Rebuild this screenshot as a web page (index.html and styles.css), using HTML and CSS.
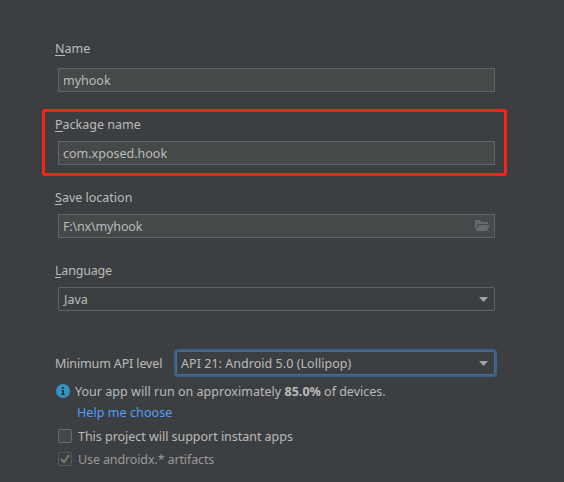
FILE: index.html
```html
<!DOCTYPE html>
<html lang="en">
<head>
<meta charset="utf-8">
<title>New Project</title>
<link rel="stylesheet" href="styles.css">
</head>
<body>
<main class="form">
  <section class="group group-first">
    <label class="label"><span><u>N</u>ame</span></label>
    <div class="field"><span class="text">myhook</span></div>
  </section>
  <section class="group">
    <label class="label"><span><u>P</u>ackage name</span></label>
    <div class="field"><span class="text">com.xposed.hook</span></div>
    <div class="highlight"></div>
  </section>
  <section class="group">
    <label class="label"><span><u>S</u>ave location</span></label>
    <div class="field"><span class="text t-path">F:\nx\myhook</span>
      <svg class="folder" width="16" height="12" viewBox="0 0 16 12"><path fill="#616b70" d="M1 0h5l1.5 2H14v2H4L1 9.5zM4.6 5H16l-3 6H1.5z"/></svg>
    </div>
  </section>
  <section class="group">
    <label class="label"><span class="t-language"><u>L</u>anguage</span></label>
    <div class="field combo"><span class="text">Java</span>
      <svg width="9" height="5" viewBox="0 0 9 5"><path fill="#a0a3a4" d="M0 0h9L4.5 5z"/></svg>
    </div>
  </section>
  <section class="api">
    <label class="label"><span class="text t-min">Minimum API level</span></label>
    <div class="field combo focused"><span class="text t-api">API 21: Android 5.0 (Lollipop)</span>
      <svg width="9" height="5" viewBox="0 0 9 5"><path fill="#a0a3a4" d="M0 0h9L4.5 5z"/></svg>
    </div>
  </section>
  <div class="info">
    <svg width="14" height="14" viewBox="0 0 14 14"><circle cx="7" cy="7" r="7" fill="#3592c4"/><path fill="#34393c" d="M6 3h2v2H6zM5 6h3v4h1v1H5v-1h1V7H5z"/></svg>
    <p class="line text"><span class="t-your">Your app will run on approximately </span><b>85.0%</b><span> of devices.</span></p>
  </div>
  <a class="help"><span class="text t-help">Help me choose</span></a>
  <div class="check">
    <span class="box"></span><span class="text t-instant">This project will support instant apps</span>
  </div>
  <div class="check disabled">
    <span class="box"><svg width="12" height="12" viewBox="0 0 12 12"><path fill="none" stroke="#777a7b" stroke-width="2" d="M2 6l3 3.2L10 2"/></svg></span><span class="text t-androidx">Use androidx.* artifacts</span>
  </div>
</main>
</body>
</html>
```
FILE: styles.css
```css
* { box-sizing: border-box; }
body {
  margin: 0;
  width: 564px;
  height: 482px;
  overflow: hidden;
  background: #3c3f41;
  color: #bbbbbb;
  font: 12.5px/20px "Noto Sans", "Open Sans", sans-serif;
}
.form { display: flex; flex-direction: column; padding: 39px 69px 0 55px; }
.form span, .form b { white-space: pre; }
.group { position: relative; display: flex; flex-direction: column; gap: 6px; height: 50px; margin-bottom: 23px; }
.group-first { gap: 9px; height: 53px; }
.label { display: block; height: 20px; }
.text { display: block; padding-top: 2px; line-height: 20px; }
u { text-decoration: none; display: inline-block; height: 17px; line-height: 20px; vertical-align: top; border-bottom: 1px solid #bbbbbb; }
.field {
  display: flex;
  align-items: center;
  justify-content: space-between;
  height: 24px;
  margin-left: 3px;
  padding: 0 4px;
  border: 1px solid #646464;
  background: #45494a;
}
.combo { background: #3c3f41; border-radius: 2px; padding: 0 6px 0 5px; }
.highlight {
  position: absolute;
  inset: -6px -12px -11px -13px;
  border: 3px solid #ff2016;
  border-radius: 3px;
}
.api { display: flex; align-items: center; justify-content: space-between; height: 28px; margin: 15px -2px 4px 0; }
.api .label { height: 22px; padding-bottom: 2px; }
.api .focused { width: 323px; height: 28px; margin: 0; border: 2px solid #3d6185; border-radius: 4px; box-shadow: inset 0 0 0 1px #466d94; padding: 0 7px 0 5px; }
.info { display: flex; align-items: center; gap: 5px; height: 20px; padding-left: 1px; }
.line { margin: 0; }
.help { height: 23.5px; padding-left: 22px; color: #589df6; }
.check { display: flex; align-items: center; gap: 6px; height: 23px; padding-left: 3px; }
.box { display: flex; align-items: center; justify-content: center; width: 14px; height: 14px; border: 1px solid #6b6b6b; border-radius: 2px; background: #43494a; }
.disabled { color: #999999; }
.disabled .box { border-color: #575757; background: #3c3f41; }
.t-path { letter-spacing: -0.15px; }
.t-language { letter-spacing: -0.2px; }
.t-min { letter-spacing: -0.13px; }
.t-api { letter-spacing: 0.04px; }
.t-your { letter-spacing: 0.03px; }
.t-help { letter-spacing: 0.07px; }
.t-instant { letter-spacing: -0.03px; }
.t-androidx { letter-spacing: -0.12px; }
```
